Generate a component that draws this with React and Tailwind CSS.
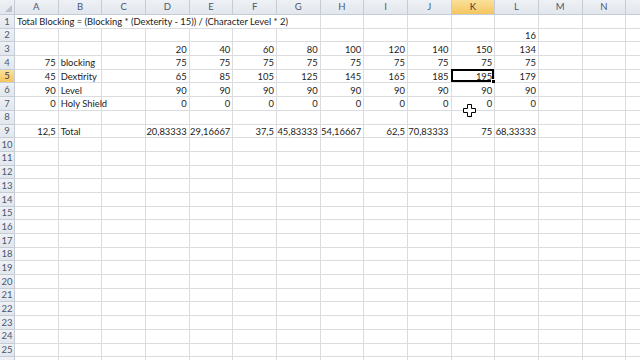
const cols = ["A", "B", "C", "D", "E", "F", "G", "H", "I", "J", "K", "L", "M", "N", ""];

// row number -> { colIndex: value }, text in B is left aligned
const data = {
  2: { 11: "16" },
  3: { 3: "20", 4: "40", 5: "60", 6: "80", 7: "100", 8: "120", 9: "140", 10: "150", 11: "134" },
  4: { 0: "75", 1: "blocking", 3: "75", 4: "75", 5: "75", 6: "75", 7: "75", 8: "75", 9: "75", 10: "75", 11: "75" },
  5: { 0: "45", 1: "Dextirity", 3: "65", 4: "85", 5: "105", 6: "125", 7: "145", 8: "165", 9: "185", 10: "195", 11: "179" },
  6: { 0: "90", 1: "Level", 3: "90", 4: "90", 5: "90", 6: "90", 7: "90", 8: "90", 9: "90", 10: "90", 11: "90" },
  7: { 0: "0", 1: "Holy Shield", 3: "0", 4: "0", 5: "0", 6: "0", 7: "0", 8: "0", 9: "0", 10: "0", 11: "0" },
  9: {
    0: "12,5",
    1: "Total",
    3: "20,83333",
    4: "29,16667",
    5: "37,5",
    6: "45,83333",
    7: "54,16667",
    8: "62,5",
    9: "70,83333",
    10: "75",
    11: "68,33333",
  },
};

const rowCls = "grid grid-cols-[15px_repeat(15,43.67px)] h-[13.7px]";

function RowHead({ n }) {
  const active = n === 5;
  return (
    <div
      className={
        "flex items-center justify-center border-r border-b border-[#c5ccd6] text-[9.5px] leading-none " +
        (active
          ? "bg-gradient-to-b from-[#fbe09a] to-[#f3c65e] text-[#3b3b3b]"
          : "bg-gradient-to-b from-[#eef1f5] to-[#e2e7ee] text-[#4a5870]")
      }
    >
      {n}
    </div>
  );
}

function Cell({ value, col, selected }) {
  const left = col === 1;
  return (
    <div
      className={
        "relative flex items-end border-r border-b border-[#dadcdf] px-[2px] pb-[1px] leading-none whitespace-nowrap text-[9.4px] text-[#222] " +
        (left ? "justify-start" : "justify-end")
      }
    >
      {value}
      {selected && (
        <>
          <div className="absolute -left-[1px] -top-[1px] right-0 bottom-0 border-2 border-black"></div>
          <div className="absolute -right-[2px] -bottom-[2px] w-[5px] h-[5px] bg-black border border-white"></div>
        </>
      )}
    </div>
  );
}

function Cursor() {
  return (
    <svg className="absolute left-[463px] top-[104px]" width="13" height="14" viewBox="0 0 13 14">
      <path
        d="M4.5 0.5h4v4h4v4h-4v4h-4v-4h-4v-4h4z"
        fill="#fff"
        stroke="#000"
        strokeWidth="1"
        strokeLinejoin="round"
      />
      <path d="M5.5 12.5h3" stroke="#000" strokeWidth="1.2" />
    </svg>
  );
}

export default function App() {
  const rows = Array.from({ length: 26 }, (_, i) => i + 1);
  return (
    <div
      className="relative w-[640px] h-[360px] overflow-hidden bg-white"
      style={{ fontFamily: "Lato, 'Liberation Sans', sans-serif" }}
    >
      <div className="grid grid-cols-[15px_repeat(15,43.67px)] h-[15px]">
        <div className="relative border-r border-b border-[#c5ccd6] bg-gradient-to-b from-[#eef1f5] to-[#e2e7ee]">
          <div className="absolute right-[2px] bottom-[2px] w-0 h-0 border-l-[7px] border-l-transparent border-b-[7px] border-b-[#b9c1cc]"></div>
        </div>
        {cols.map((c, i) => (
          <div
            key={i}
            className={
              "flex items-center justify-center border-r border-b border-[#c5ccd6] text-[9.5px] leading-none " +
              (i === 10
                ? "bg-gradient-to-b from-[#fbe09a] to-[#f3c65e] text-[#3b3b3b]"
                : "bg-gradient-to-b from-[#eef1f5] to-[#e2e7ee] text-[#4a5870]")
            }
          >
            {c}
          </div>
        ))}
      </div>

      {rows.map((n) => {
        if (n === 1) {
          return (
            <div key={n} className={rowCls}>
              <RowHead n={n} />
              <div className="col-span-7 flex items-end border-r border-b border-[#dadcdf] px-[2px] pb-[1px] leading-none whitespace-nowrap text-[9.4px] text-[#222]">
                Total Blocking = (Blocking * (Dexterity - 15)) / (Character Level * 2)
              </div>
              {cols.slice(7).map((c, i) => (
                <Cell key={i} col={i + 7} />
              ))}
            </div>
          );
        }
        const r = data[n] || {};
        return (
          <div key={n} className={rowCls}>
            <RowHead n={n < 26 ? n : ""} />
            {cols.map((c, i) => (
              <Cell key={i} col={i} value={r[i]} selected={n === 5 && i === 10} />
            ))}
          </div>
        );
      })}
      <Cursor />
    </div>
  );
}
